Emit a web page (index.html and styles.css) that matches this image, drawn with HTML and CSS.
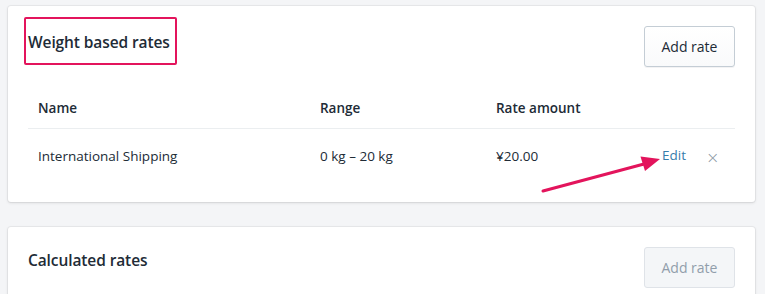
FILE: index.html
```html
<!DOCTYPE html>
<html>
<head>
<meta charset="utf-8">
<link rel="stylesheet" href="styles.css">
</head>
<body>
<div class="page">
  <section class="card">
    <div class="card-head">
      <h2 class="title">Weight based rates</h2>
      <button class="btn">Add rate</button>
      <div class="highlight"></div>
    </div>
    <div class="table">
      <div class="row head">
        <div class="c-name">Name</div>
        <div class="c-range">Range</div>
        <div class="c-amount">Rate amount</div>
        <div></div>
      </div>
      <div class="row body">
        <div class="c-name">International Shipping</div>
        <div class="c-range">0 kg – 20 kg</div>
        <div class="c-amount">¥20.00</div>
        <div class="actions"><a class="edit">Edit</a><span class="close">×</span></div>
      </div>
    </div>
    <svg class="arrow" width="140" height="45" viewBox="0 0 140 45">
      <line x1="8" y1="40" x2="109" y2="13" stroke="#e3145c" stroke-width="3" stroke-linecap="round"/>
      <polygon points="125,8 105.5,5.5 110,20" fill="#e3145c"/>
    </svg>
  </section>
  <section class="card card2">
    <div class="card-head">
      <h2 class="title">Calculated rates</h2>
      <button class="btn disabled">Add rate</button>
    </div>
  </section>
</div>
</body>
</html>
```
FILE: styles.css
```css
* { box-sizing: border-box; }
body {
  margin: 0;
  background: #f4f5f7;
  font-family: "Open Sans", "Noto Sans", sans-serif;
  color: #212b36;
  width: 765px;
  height: 294px;
  overflow: hidden;
}
.page {
  padding: 6px 10px 0 8px;
  display: flex;
  flex-direction: column;
  gap: 25px;
}
.card {
  position: relative;
  background: #fff;
  border-radius: 3px;
  box-shadow: 0 0 0 1px rgba(63,63,68,0.06), 0 1px 3px 0 rgba(63,63,68,0.15);
  padding: 20px 20px 19px 20px;
}
.card-head {
  position: relative;
  display: flex;
  justify-content: space-between;
  align-items: flex-start;
}
.title {
  margin: 4px 0 0 0;
  font-size: 15.5px;
  font-weight: 600;
  line-height: 24px;
  letter-spacing: -0.1px;
}
.highlight {
  position: absolute;
  left: -4px;
  top: -9px;
  width: 153px;
  height: 48px;
  border: 2.5px solid #e3145c;
  border-radius: 2px;
}
.btn {
  width: 91px;
  height: 41px;
  background: linear-gradient(#fff, #f9fafb);
  border: 1px solid #c4cdd5;
  border-radius: 3px;
  box-shadow: 0 1px 0 rgba(22,29,37,0.05);
  font-family: inherit;
  font-size: 14px;
  color: #212b36;
  padding: 0;
}
.btn.disabled {
  background: #f4f6f8;
  border-color: #dfe3e8;
  color: #919eab;
  box-shadow: none;
}
.table { margin-top: 21px; }
.row {
  display: grid;
  grid-template-columns: 282px 176px 166px 1fr;
  align-items: center;
  padding-left: 10px;
  font-size: 13.5px;
}
.row.head {
  height: 41px;
  font-weight: 600;
  border-bottom: 1px solid #ebeef0;
}
.row.body {
  height: 54px;
}
.actions {
  display: flex;
  align-items: center;
  gap: 20px;
}
.edit {
  color: #367cab;
  font-size: 13.5px;
  margin-top: -3px;
}
.close {
  color: #8c98a4;
  font-size: 16px;
  font-family: "DejaVu Sans", sans-serif;
  font-weight: 300;
  margin-top: 2px;
}
.arrow {
  position: absolute;
  left: 527px;
  top: 145px;
}
.card2 { padding-bottom: 30px; }
.card2 .title { margin-top: 1px; }
```
